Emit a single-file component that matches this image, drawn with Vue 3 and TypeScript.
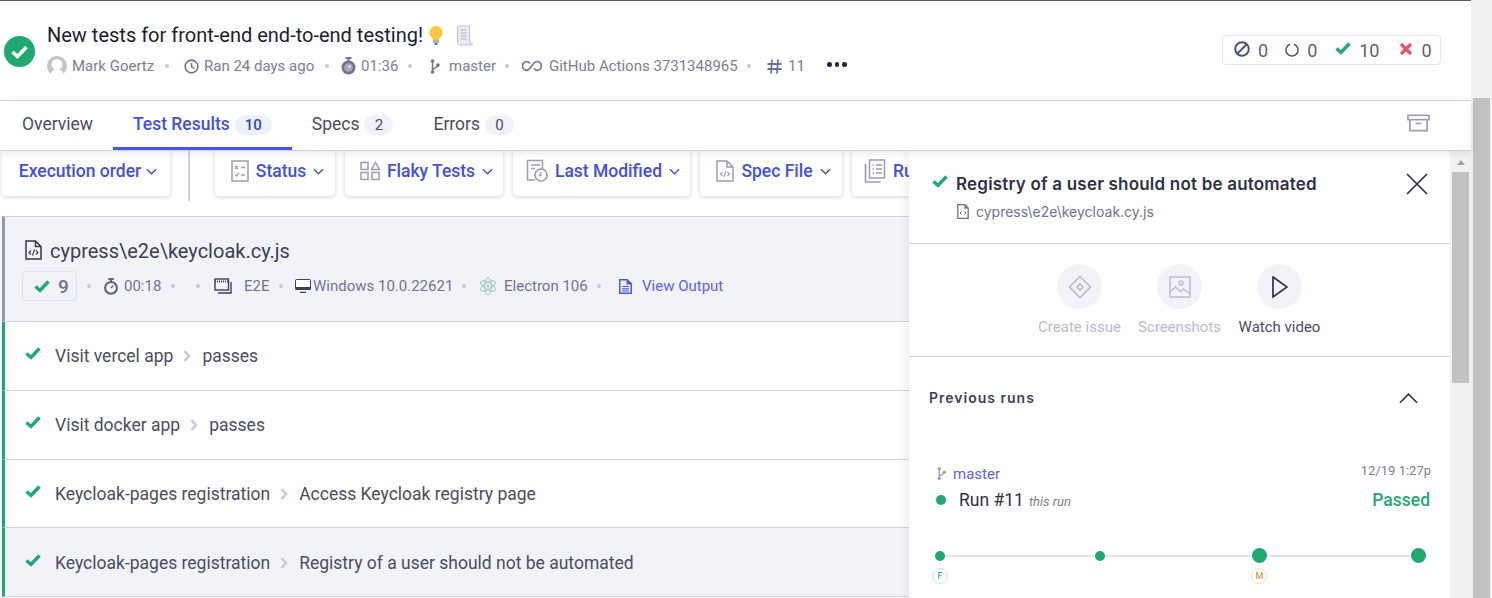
<script setup lang="ts">
const tests = [
  { group: 'Visit vercel app', name: 'passes', active: false },
  { group: 'Visit docker app', name: 'passes', active: false },
  { group: 'Keycloak-pages registration', name: 'Access Keycloak registry page', active: false },
  { group: 'Keycloak-pages registration', name: 'Registry of a user should not be automated', active: true },
]
</script>

<template>
  <div class="page">
    <div class="app">
      <header class="head">
        <svg class="state" viewBox="0 0 31 31" width="31" height="31">
          <circle cx="15.5" cy="15.5" r="15.5" fill="#1fa971" />
          <path d="M8.5 16l5 4.5 9-9.5" fill="none" stroke="#fff" stroke-width="3.6" />
        </svg>
        <div class="head-main">
          <div class="title">
            New tests for front-end end-to-end testing!
            <svg class="bulb" viewBox="0 0 16 19" width="16" height="19">
              <path d="M8 0a6.500 6.500 0 0 0-4 11.600c.8.8 1 1.500 1 2.400h6c0-.9.200-1.600 1-2.400A6.500 6.500 0 0 0 8 0z" fill="#f8c83c" />
              <rect x="5" y="14" width="6" height="3" fill="#a9b3bd" />
              <rect x="6.500" y="17" width="3" height="2" fill="#6d7780" />
            </svg>
            <svg class="scroll" viewBox="0 0 19 21" width="19" height="21">
              <path d="M2.500 1h12v17h3c0 1-.5 2-1.500 2H4.500c-1 0-2-1-2-2z" fill="#eeeaf2" stroke="#c4bfd2" />
              <path d="M5.500 5h6M5.500 8h6M5.500 11h6M5.500 14h6" stroke="#b5b2c2" />
            </svg>
          </div>
          <div class="meta">
            <svg class="m-avatar" viewBox="0 0 20 20" width="20" height="20">
              <circle cx="10" cy="10" r="10" fill="#c4c4c4" />
              <circle cx="10" cy="8.500" r="5.500" fill="#fff" />
              <path d="M3.500 20c0-5 3-6.500 6.500-6.500s6.500 1.500 6.500 6.500z" fill="#fff" />
            </svg>
            <span class="m-name">Mark Goertz</span>
            <i class="dot d1"></i>
            <svg class="m-ic" viewBox="0 0 16 16" width="15" height="15">
              <circle cx="8" cy="8" r="6.800" fill="none" stroke="#6f7390" stroke-width="1.700" />
              <path d="M8 4v4.500l3 1.500" fill="none" stroke="#6f7390" stroke-width="1.500" />
            </svg>
            <span class="m-ran">Ran 24 days ago</span>
            <i class="dot d2"></i>
            <svg class="m-watch" viewBox="0 0 15 18" width="15" height="18">
              <circle cx="7.500" cy="10.500" r="7" fill="#6f7390" />
              <circle cx="7.500" cy="10.500" r="4.300" fill="#a6a9bd" />
              <path d="M7.500 10.500l2-2" stroke="#fff" stroke-width="1.200" />
              <rect x="4.500" y="0" width="6" height="2" fill="#6f7390" />
              <rect x="6.500" y="1" width="2" height="3" fill="#6f7390" />
            </svg>
            <span class="m-time">01:36</span>
            <i class="dot d3"></i>
            <svg class="m-branch" viewBox="0 0 10 15" width="10" height="15">
              <circle cx="2.500" cy="2" r="1.800" fill="#6f7390" />
              <circle cx="2.500" cy="13" r="1.800" fill="#6f7390" />
              <circle cx="8" cy="6" r="1.800" fill="#6f7390" />
              <path d="M2.500 2v11M8 6c0 3-5.500 3-5.500 5" fill="none" stroke="#6f7390" stroke-width="1.500" />
            </svg>
            <span class="m-master">master</span>
            <i class="dot d4"></i>
            <svg class="m-link" viewBox="0 0 20 12" width="20" height="12">
              <path d="M8 3.500C7 2 6 1.500 4.800 1.500a4.300 4.300 0 0 0 0 8.800c3.500 0 6-8.800 10.200-8.800a4.300 4.300 0 0 1 0 8.800c-1.300 0-2.300-.6-3-2" fill="none" stroke="#6f7390" stroke-width="1.700" />
            </svg>
            <span class="m-ci">GitHub Actions 3731348965</span>
            <i class="dot d5"></i>
            <svg class="m-hash" viewBox="0 0 15 15" width="15" height="15">
              <path d="M5 0.500L4 14.500M11 0.500L10 14.500M0.500 5h14M0.500 10h14" stroke="#6f7390" stroke-width="1.800" fill="none" />
            </svg>
            <span class="m-num">11</span>
            <span class="more"><i></i><i></i><i></i></span>
          </div>
        </div>
        <div class="stats">
          <span class="stat s1">
            <svg viewBox="0 0 16 16" width="16" height="16">
              <circle cx="8" cy="8" r="6.800" fill="none" stroke="#4f5370" stroke-width="2" />
              <path d="M3.500 12.500l9-9" stroke="#4f5370" stroke-width="2" />
            </svg>
            0
          </span>
          <span class="stat s2">
            <svg viewBox="0 0 14 14" width="14" height="14">
              <path d="M8.800 1.300a6 6 0 1 1-3.600 0" fill="none" stroke="#4f5370" stroke-width="1.500" />
            </svg>
            0
          </span>
          <span class="stat s3">
            <svg viewBox="0 0 16 13" width="16" height="13">
              <path d="M1.500 6.500l4.500 4 8.500-9" fill="none" stroke="#1fa971" stroke-width="3.400" />
            </svg>
            10
          </span>
          <span class="stat s4">
            <svg viewBox="0 0 14 14" width="14" height="14">
              <path d="M2 2l10 10M12 2L2 12" stroke="#e45770" stroke-width="3.400" />
            </svg>
            0
          </span>
        </div>
      </header>

      <nav class="tabs">
        <a class="tab t-over">Overview</a>
        <a class="tab t-res active">Test Results <b class="pill blue">10</b></a>
        <a class="tab t-spec">Specs <b class="pill">2</b></a>
        <a class="tab t-err">Errors <b class="pill">0</b></a>
        <svg class="archive" viewBox="0 0 24 18" width="23" height="18">
          <rect x="1" y="1" width="22" height="4.500" fill="none" stroke="#9a9db5" stroke-width="1.700" />
          <path d="M3 5.500v11.500h18V5.500M9 9.500h6" fill="none" stroke="#9a9db5" stroke-width="1.700" />
        </svg>
      </nav>

      <div class="body">
        <section class="left">
          <div class="filters">
            <button class="fbtn order">Execution order <svg class="chev" viewBox="0 0 12 7" width="11" height="7"><path d="M1 1l5 5 5-5" fill="none" stroke="#4450d8" stroke-width="1.500" /></svg></button>
            <span class="sep"></span>
            <button class="fbtn status">
              <svg viewBox="0 0 18 22" width="18" height="22">
                <rect x="1" y="1" width="16" height="20" fill="none" stroke="#9a9db5" stroke-width="1.500" />
                <path d="M4 6l3 3M7 6l-3 3M10 7.500h4M4 14.500l1.500 1.500 2.500-3M10 15h4" fill="none" stroke="#9a9db5" stroke-width="1.300" />
              </svg>
              Status <svg class="chev" viewBox="0 0 12 7" width="11" height="7"><path d="M1 1l5 5 5-5" fill="none" stroke="#4450d8" stroke-width="1.500" /></svg>
            </button>
            <button class="fbtn flaky">
              <svg viewBox="0 0 20 20" width="20" height="20">
                <rect x="1" y="1.500" width="7" height="7" fill="none" stroke="#9a9db5" stroke-width="1.500" />
                <path d="M15.500 1.500l4 7h-8z" fill="none" stroke="#9a9db5" stroke-width="1.500" />
                <rect x="1" y="11.500" width="7" height="7" fill="none" stroke="#9a9db5" stroke-width="1.500" />
                <rect x="12" y="11.500" width="7" height="7" fill="none" stroke="#9a9db5" stroke-width="1.500" />
              </svg>
              Flaky Tests <svg class="chev" viewBox="0 0 12 7" width="11" height="7"><path d="M1 1l5 5 5-5" fill="none" stroke="#4450d8" stroke-width="1.500" /></svg>
            </button>
            <button class="fbtn modified">
              <svg viewBox="0 0 22 24" width="22" height="24">
                <path d="M9 21H1.500V1.500h15V10" fill="none" stroke="#9a9db5" stroke-width="1.500" />
                <path d="M5 6h9M5 9.500h4" stroke="#9a9db5" stroke-width="1.300" />
                <circle cx="15" cy="16" r="6" fill="none" stroke="#9a9db5" stroke-width="1.700" />
                <path d="M15 13v3.500h-2.500" fill="none" stroke="#9a9db5" stroke-width="1.300" />
              </svg>
              Last Modified <svg class="chev" viewBox="0 0 12 7" width="11" height="7"><path d="M1 1l5 5 5-5" fill="none" stroke="#4450d8" stroke-width="1.500" /></svg>
            </button>
            <button class="fbtn spec">
              <svg viewBox="0 0 18 22" width="18" height="22">
                <path d="M11 1H1v20h16V7zM11 1v6h6" fill="none" stroke="#9a9db5" stroke-width="1.500" />
                <path d="M6.500 12l-2 2 2 2M11.500 12l2 2-2 2M10 11l-2 6" fill="none" stroke="#9a9db5" stroke-width="1.100" />
              </svg>
              Spec File <svg class="chev" viewBox="0 0 12 7" width="11" height="7"><path d="M1 1l5 5 5-5" fill="none" stroke="#4450d8" stroke-width="1.500" /></svg>
            </button>
            <button class="fbtn runs">
              <svg viewBox="0 0 22 24" width="22" height="24">
                <rect x="5.500" y="1" width="15" height="18" fill="none" stroke="#9a9db5" stroke-width="1.500" />
                <path d="M1.500 5v18h15" fill="none" stroke="#9a9db5" stroke-width="1.700" />
                <path d="M8.500 6h1.500M12 6h6M8.500 10h1.500M12 10h6M8.500 14h1.500M12 14h6" stroke="#9a9db5" stroke-width="1.300" />
              </svg>
              Run Group
            </button>
          </div>

          <div class="spec-row">
            <div class="spec-name">
              <svg viewBox="0 0 17 20" width="17" height="20">
                <path d="M10.500 1H1v18h15V6.500zM10.500 1v5.500H16" fill="none" stroke="#33364a" stroke-width="1.500" />
                <path d="M6 10.500l-2 2 2 2M11 10.500l2 2-2 2M9.500 9.500l-2 6" fill="none" stroke="#33364a" stroke-width="1.100" />
              </svg>
              cypress\e2e\keycloak.cy.js
            </div>
            <div class="spec-meta">
              <span class="count">
                <svg viewBox="0 0 16 13" width="16" height="13"><path d="M1.500 6.500l4.500 4 8.500-9" fill="none" stroke="#1fa971" stroke-width="3.400" /></svg>
                9
              </span>
              <i class="dot e1"></i>
              <svg class="e-watch" viewBox="0 0 15 18" width="14" height="17">
                <circle cx="7.500" cy="10.500" r="6.300" fill="none" stroke="#5d6078" stroke-width="2.200" />
                <path d="M7.500 10.500l2.500-2.500" stroke="#5d6078" stroke-width="1.500" />
                <rect x="4.500" y="0" width="6" height="2" fill="#5d6078" />
                <rect x="6.500" y="1" width="2" height="3" fill="#5d6078" />
              </svg>
              <span class="e-time">00:18</span>
              <i class="dot e2"></i>
              <i class="dot e3"></i>
              <svg class="e-win" viewBox="0 0 18 16" width="18" height="16">
                <rect x="1" y="1" width="13.500" height="11" fill="none" stroke="#3c3f55" stroke-width="1.400" />
                <path d="M1 3.500h13.500" stroke="#3c3f55" stroke-width="2" stroke-dasharray="1 1" />
                <path d="M17 4v11H4" fill="none" stroke="#3c3f55" stroke-width="1.400" />
              </svg>
              <span class="e-type">E2E</span>
              <i class="dot e4"></i>
              <svg class="e-mon" viewBox="0 0 16 14" width="16" height="14">
                <rect x="0.500" y="0.500" width="15" height="10" rx="1" fill="#fff" stroke="#3c3f55" />
                <rect x="0.500" y="8" width="15" height="3" fill="#3c3f55" />
                <path d="M5 13.500h6" stroke="#3c3f55" stroke-width="1.500" />
              </svg>
              <span class="e-os">Windows 10.0.22621</span>
              <i class="dot e5"></i>
              <svg class="e-electron" viewBox="0 0 18 20" width="18" height="20">
                <g fill="none" stroke="#8db8bc" stroke-width="0.800">
                  <ellipse cx="9" cy="10" rx="8.500" ry="3.400" transform="rotate(30 9 10)" />
                  <ellipse cx="9" cy="10" rx="8.500" ry="3.400" transform="rotate(90 9 10)" />
                  <ellipse cx="9" cy="10" rx="8.500" ry="3.400" transform="rotate(150 9 10)" />
                </g>
                <circle cx="9" cy="10" r="1.200" fill="#8db8bc" />
              </svg>
              <span class="e-br">Electron 106</span>
              <i class="dot e6"></i>
              <svg class="e-doc" viewBox="0 0 13 15" width="13" height="15">
                <path d="M8.500 0H0v15h13V4.500zM3 7.500h7M3 10h7M3 12.500h7" fill="#4a57e0" fill-rule="evenodd" />
                <path d="M1.500 1.500h6v4h4v8h-10z" fill="#f2f3f9" />
                <path d="M3 7.500h7M3 9.800h7M3 12h7" stroke="#4a57e0" stroke-width="1.200" />
              </svg>
              <a class="e-out">View Output</a>
            </div>
          </div>

          <div v-for="(t, i) in tests" :key="i" class="test" :class="{ on: t.active }">
            <svg viewBox="0 0 16 13" width="16" height="13"><path d="M1.500 6.500l4.500 4 8.500-9" fill="none" stroke="#1fa971" stroke-width="3.400" /></svg>
            <span class="t-group">{{ t.group }}</span>
            <svg class="t-sep" viewBox="0 0 8 12" width="8" height="12"><path d="M1.500 1l4.500 5-4.500 5" fill="none" stroke="#c8c9da" stroke-width="2.600" /></svg>
            <span>{{ t.name }}</span>
          </div>
        </section>

        <aside class="panel">
          <div class="p-scroll">
            <div class="p-head">
              <div class="p-title">
                <svg viewBox="0 0 16 13" width="16" height="13"><path d="M1.500 6.500l4.500 4 8.500-9" fill="none" stroke="#1fa971" stroke-width="3.400" /></svg>
                <h2>Registry of a user should not be automated</h2>
                <svg class="close" viewBox="0 0 22 22" width="22" height="22"><path d="M1 1l20 20M21 1L1 21" stroke="#2f3245" stroke-width="1.700" /></svg>
              </div>
              <div class="p-file">
                <svg viewBox="0 0 12 15" width="12" height="15">
                  <path d="M8 .7H.8v13.600h10.400V4zM8 .7V4h3.200" fill="none" stroke="#6f7390" stroke-width="1.300" />
                  <path d="M4.500 7.500L3 9l1.500 1.500M7.500 7.500L9 9l-1.500 1.500" fill="none" stroke="#6f7390" stroke-width="1" />
                </svg>
                cypress\e2e\keycloak.cy.js
              </div>
            </div>

            <div class="actions">
              <div class="action off">
                <span class="circle">
                  <svg viewBox="0 0 24 24" width="24" height="24">
                    <path d="M12 1.500L22.500 12 12 22.500 1.500 12z" fill="none" stroke="#b9bbd0" stroke-width="1.700" />
                    <path d="M12 9l3 3-3 3-3-3z" fill="none" stroke="#b9bbd0" stroke-width="1.700" />
                  </svg>
                </span>
                Create issue
              </div>
              <div class="action off">
                <span class="circle">
                  <svg viewBox="0 0 22 22" width="22" height="22">
                    <rect x="1" y="1" width="20" height="20" fill="none" stroke="#b9bbd0" stroke-width="1.500" />
                    <circle cx="12" cy="7" r="2" fill="none" stroke="#b9bbd0" stroke-width="1.400" />
                    <path d="M1 16l5.500-5 5 4.500 3-2.500 6.500 5" fill="none" stroke="#b9bbd0" stroke-width="1.400" />
                  </svg>
                </span>
                Screenshots
              </div>
              <div class="action">
                <span class="circle">
                  <svg viewBox="0 0 16 22" width="16" height="22"><path d="M1 1l14 10L1 21z" fill="none" stroke="#2f3245" stroke-width="1.700" /></svg>
                </span>
                Watch video
              </div>
            </div>

            <div class="runs-sec">
              <div class="r-head">
                <h3>Previous runs</h3>
                <svg viewBox="0 0 20 12" width="19" height="12"><path d="M1 11l9-9 9 9" fill="none" stroke="#2f3245" stroke-width="1.700" /></svg>
              </div>
              <div class="r-top">
                <span class="r-branch">
                  <svg viewBox="0 0 10 15" width="9" height="15">
                    <circle cx="2.500" cy="2" r="1.800" fill="#9a9db5" />
                    <circle cx="2.500" cy="13" r="1.800" fill="#9a9db5" />
                    <circle cx="8" cy="6" r="1.800" fill="#9a9db5" />
                    <path d="M2.500 2v11M8 6c0 3-5.500 3-5.500 5" fill="none" stroke="#9a9db5" stroke-width="1.500" />
                  </svg>
                  master
                </span>
                <span class="r-date">12/19 1:27p</span>
              </div>
              <div class="r-run">
                <i class="r-dot"></i>
                <span class="r-name">Run #11</span>
                <em>this run</em>
                <span class="r-pass">Passed</span>
              </div>
              <div class="timeline">
                <div class="node"><i class="small"></i><b class="f">F</b></div>
                <div class="node"><i class="small"></i></div>
                <div class="node"><i></i><b class="m">M</b></div>
                <div class="node"><i></i></div>
              </div>
            </div>
          </div>
          <div class="inner-bar"><span class="arrow"></span><span class="inner-thumb"></span></div>
        </aside>
      </div>
    </div>
    <div class="outer-bar"><span class="outer-thumb"></span></div>
  </div>
</template>

<style>
html, body {
  margin: 0;
  overflow: hidden;
  background: #fff;
}
</style>

<style scoped>
.page {
  display: flex;
  width: 1492px;
  height: 598px;
  overflow: hidden;
  font-family: Roboto, "Liberation Sans", sans-serif;
  color: #4a4d60;
}
.app {
  width: 1471px;
  flex: none;
  display: flex;
  flex-direction: column;
}
.outer-bar {
  flex: 1;
  background: #f1f1f1;
  padding: 98px 2px 0 2px;
}
.outer-thumb {
  display: block;
  height: 500px;
  background: #c1c1c1;
}

.head {
  flex: none;
  box-sizing: border-box;
  height: 100px;
  border-top: 1px solid #595959;
  display: flex;
  padding-left: 4px;
  position: relative;
}
.state {
  margin-top: 35px;
  flex: none;
}
.head-main {
  margin: 22px 0 0 12px;
}
.title {
  display: flex;
  align-items: center;
  height: 24px;
  font-size: 20px;
  color: #1c1e2e;
  white-space: nowrap;
}
.bulb {
  margin-left: 5px;
}
.scroll {
  margin-left: 11px;
}
.meta {
  display: flex;
  align-items: center;
  height: 24px;
  margin-top: 7px;
  font-size: 15px;
  color: #7a7e96;
  white-space: nowrap;
}
.dot {
  display: block;
  flex: none;
  width: 4px;
  height: 4px;
  border-radius: 50%;
  background: #c6c8d8;
}
.m-name { margin-left: 5px; width: 82px; }
.d1 { margin-left: 11px; }
.m-ic { margin-left: 15px; }
.m-ran { margin-left: 5px; width: 110px; }
.d2 { margin-left: 11px; }
.m-watch { margin-left: 12px; }
.m-time { margin-left: 5px; width: 36px; }
.d3 { margin-left: 11px; }
.m-branch { margin-left: 18px; }
.m-master { margin-left: 9px; width: 46px; }
.d4 { margin-left: 10px; }
.m-link { margin-left: 13px; }
.m-ci { margin-left: 7px; width: 188px; }
.d5 { margin-left: 10px; }
.m-hash { margin-left: 16px; }
.m-num { margin-left: 6px; width: 15px; }
.more {
  display: flex;
  gap: 3px;
  margin-left: 24px;
  margin-top: -3px;
}
.more i {
  display: block;
  width: 4.500px;
  height: 4.500px;
  border-radius: 50%;
  background: #23263a;
}
.stats {
  position: absolute;
  left: 1222px;
  top: 34px;
  box-sizing: border-box;
  width: 219px;
  height: 30px;
  border: 1px solid #e3e4f0;
  border-radius: 4px;
  display: flex;
  align-items: center;
  font-size: 18px;
  color: #5d6078;
}
.stat {
  display: flex;
  align-items: center;
  gap: 8px;
}
.s1 { margin-left: 11px; }
.s1 svg { margin-top: -3px; }
.s2 { margin-left: 17px; }
.s3 { margin-left: 18px; }
.s3 svg { margin-top: -3px; }
.s4 { margin-left: 20px; }
.s4 svg { margin-top: -3px; }

.tabs {
  flex: none;
  box-sizing: border-box;
  height: 51px;
  border-top: 1px solid #d0d1e4;
  border-bottom: 1px solid #d0d1e4;
  display: flex;
  position: relative;
  z-index: 2;
  background: #fff;
  box-shadow: 0 2px 6px rgba(60, 64, 110, 0.12);
  font-size: 17.5px;
  color: #4a4d60;
}
.tab {
  display: flex;
  align-items: center;
  height: 49px;
  box-sizing: border-box;
  padding-bottom: 4px;
  white-space: nowrap;
}
.t-over { margin-left: 22px; }
.t-res {
  margin-left: 20px;
  padding: 0 20px 4px 20px;
}
.t-spec { margin-left: 20px; }
.t-err { margin-left: 40px; }
.active {
  color: #4450d8;
  font-weight: 500;
  border-bottom: 3px solid #4a57e0;
  padding-bottom: 1px;
}
.pill {
  box-sizing: border-box;
  width: 29px;
  margin-left: 5px;
  height: 20px;
  border-radius: 10px;
  background: #f1f2f8;
  color: #4a4d60;
  font-size: 15px;
  font-weight: 400;
  line-height: 20px;
  text-align: center;
  margin-top: 2px;
}
.pill.blue {
  width: 37px;
  background: #eef0fb;
  color: #3a44b8;
  font-weight: 500;
}
.archive {
  position: absolute;
  left: 1407px;
  top: 13px;
}

.body {
  flex: 1;
  display: flex;
  min-height: 0;
}
.left {
  width: 909px;
  flex: none;
  overflow: hidden;
}
.filters {
  display: flex;
  align-items: flex-start;
  height: 65px;
  padding-left: 2px;
  white-space: nowrap;
}
.fbtn {
  flex: none;
  display: flex;
  align-items: center;
  justify-content: center;
  gap: 7px;
  height: 45px;
  box-sizing: border-box;
  border: 0;
  padding: 0 0 5px 4px;
  background: #fff;
  border-radius: 0 0 4px 4px;
  box-shadow: 0 1px 4px rgba(60, 64, 110, 0.22);
  font: 500 17.5px Roboto, sans-serif;
  color: #4450d8;
  margin-right: 10px;
}
.order { width: 168px; margin-right: 0; gap: 5px; }
.sep {
  flex: none;
  width: 2px;
  height: 50px;
  margin: 0 25px 0 18px;
  background: #d0d1e4;
}
.status { width: 120px; padding-left: 5px; }
.flaky { width: 158px; padding-left: 5px; }
.modified { width: 177px; padding-left: 3px; }
.spec { width: 142px; padding-left: 5px; }
.runs { width: 150px; justify-content: flex-start; padding-left: 12px; }

.spec-row {
  box-sizing: border-box;
  height: 106px;
  margin-left: 2px;
  border-top: 1px solid #d0d1e4;
  border-bottom: 1px solid #d0d1e4;
  border-left: 3px solid #9496bd;
  background: #f2f3f9;
  padding: 21px 0 0 20px;
}
.spec-name {
  display: flex;
  align-items: center;
  gap: 8px;
  height: 26px;
  font-size: 20px;
  color: #3c3f55;
}
.spec-name svg {
  margin-top: -2px;
  width: 17px;
}
.spec-meta {
  display: flex;
  align-items: center;
  height: 30px;
  margin-top: 7px;
  margin-left: -3px;
  font-size: 15px;
  color: #6f7390;
  white-space: nowrap;
}
.count {
  display: flex;
  align-items: center;
  gap: 8px;
  box-sizing: border-box;
  width: 55px;
  height: 30px;
  padding-left: 11px;
  border: 1px solid #e1e2ee;
  border-radius: 4px;
  font-size: 19px;
  font-weight: 500;
}
.e1 { margin-left: 10px; }
.e-watch { margin-left: 13px; }
.e-time { margin-left: 6px; width: 36px; }
.e2 { margin-left: 11px; }
.e3 { margin-left: 21px; }
.e-win { margin-left: 14px; }
.e-type { margin-left: 12px; width: 25px; }
.e4 { margin-left: 10px; }
.e-mon { margin-left: 12px; }
.e-os { margin-left: 2px; width: 139px; }
.e5 { margin-left: 10px; }
.e-electron { margin-left: 13px; }
.e-br { margin-left: 7px; width: 83px; }
.e6 { margin-left: 10px; }
.e-doc { margin-left: 18px; }
.e-out { margin-left: 10px; color: #5a64e0; }

.test {
  display: flex;
  align-items: center;
  box-sizing: border-box;
  height: 68.750px;
  margin-left: 2px;
  padding: 1px 0 0 20px;
  border-left: 3px solid #1fa971;
  border-bottom: 1px solid #d0d1e4;
  font-size: 17.5px;
  color: #4a4d60;
  white-space: nowrap;
}
.test.on {
  background: #f2f3f9;
}
.test > svg:first-child {
  margin-top: -5px;
}
.t-group {
  margin-left: 14px;
}
.t-sep {
  margin: 0 11px 0 10px;
}

.panel {
  width: 562px;
  flex: none;
  display: flex;
  position: relative;
  z-index: 1;
  background: #fff;
  box-shadow: -3px 0 8px rgba(60, 64, 110, 0.08);
}
.p-scroll {
  width: 541px;
  flex: none;
}
.p-head {
  box-sizing: border-box;
  height: 93px;
  border-bottom: 1px solid #d0d1e4;
  padding: 21px 22px 0 23px;
}
.p-title {
  display: flex;
  align-items: center;
  height: 24px;
  white-space: nowrap;
}
.p-title h2 {
  margin: 0 0 0 8px;
  font: 600 17px Inter, sans-serif;
  letter-spacing: 0.2px;
  color: #2f3245;
}
.p-title > svg:first-child {
  margin-top: -5px;
}
.close {
  margin-left: auto;
}
.p-file {
  display: flex;
  align-items: center;
  gap: 7px;
  margin: 7px 0 0 25px;
  font: 400 14px Inter, sans-serif;
  color: #6f7390;
}
.actions {
  box-sizing: border-box;
  height: 113px;
  border-bottom: 1px solid #d0d1e4;
  display: flex;
  justify-content: center;
  padding: 20px 0 0 0;
}
.action {
  width: 100px;
  display: flex;
  flex-direction: column;
  align-items: center;
  font-size: 15px;
  color: #4a4d60;
  line-height: 18px;
  white-space: nowrap;
}
.action.off {
  color: #b9bbd0;
}
.circle {
  width: 45px;
  height: 45px;
  margin-bottom: 9px;
  border-radius: 50%;
  background: #f2f3f9;
  display: flex;
  align-items: center;
  justify-content: center;
}
.circle svg {
  display: block;
}
.runs-sec {
  padding: 0 19px 0 20px;
}
.r-head {
  display: flex;
  align-items: center;
  justify-content: space-between;
  height: 81px;
  padding-right: 13px;
}
.r-head h3 {
  margin: 0;
  font: 600 14px Inter, sans-serif;
  letter-spacing: 1px;
  color: #3c3f55;
}
.r-top {
  display: flex;
  justify-content: space-between;
  padding-left: 8px;
  margin-top: 23px;
  height: 22px;
}
.r-branch {
  display: flex;
  align-items: center;
  gap: 7px;
  font-size: 15px;
  color: #5a64e0;
  margin-top: 3px;
}
.r-date {
  font-size: 13px;
  color: #7a7e96;
  margin-top: 2px;
}
.r-run {
  display: flex;
  align-items: center;
  height: 28px;
  margin-top: 3px;
  padding-left: 7px;
}
.r-dot {
  width: 10px;
  height: 10px;
  border-radius: 50%;
  background: #1fa971;
}
.r-name {
  margin-left: 13px;
  font-size: 17.5px;
  color: #2f3245;
}
.r-run em {
  margin: 2px 0 0 5px;
  font-size: 13px;
  color: #7a7e96;
}
.r-pass {
  margin: 0 1px 0 auto;
  font-size: 17.5px;
  font-weight: 500;
  color: #1fa971;
}
.timeline {
  display: flex;
  justify-content: space-between;
  position: relative;
  margin: 33px 1px 0 0;
}
.timeline::before {
  content: "";
  position: absolute;
  left: 12px;
  right: 12px;
  top: 8px;
  height: 2px;
  background: #e3e4ee;
}
.node {
  position: relative;
  width: 22px;
  height: 50px;
  display: flex;
  flex-direction: column;
  align-items: center;
}
.node i {
  display: block;
  width: 15px;
  height: 15px;
  margin-top: 1px;
  border-radius: 50%;
  background: #1fa971;
}
.node i.small {
  width: 10px;
  height: 10px;
  margin: 4px 0 2px;
}
.node b {
  margin-top: 5px;
  width: 16px;
  height: 16px;
  box-sizing: border-box;
  border-radius: 50%;
  font-size: 9px;
  font-weight: 400;
  line-height: 14px;
  text-align: center;
}
.node .f {
  border: 1px solid #bfeede;
  color: #1a8f60;
}
.node .m {
  border: 1px solid #f5e2a8;
  color: #d9803a;
}

.inner-bar {
  flex: 1;
  background: #f1f1f1;
  padding: 0 2px;
  position: relative;
}
.arrow {
  display: block;
  width: 0;
  margin: 9px auto 7px;
  border: 4px solid transparent;
  border-top: 0;
  border-bottom: 5px solid #a3a3a3;
  border-left-width: 4.500px;
  border-right-width: 4.500px;
}
.inner-thumb {
  display: block;
  height: 211px;
  background: #c1c1c1;
}
</style>
